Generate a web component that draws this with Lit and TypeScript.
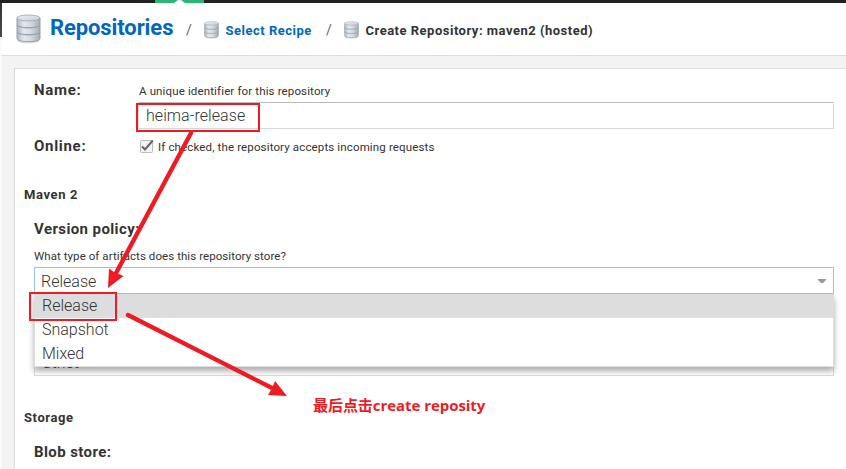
import { LitElement, html, css, svg } from "lit";
import { customElement, property } from "lit/decorators.js";

@customElement("db-icon")
class DbIcon extends LitElement {
  @property({ type: Number }) size = 16;
  static styles = css`
    :host { display: block; flex: none; }
    svg { display: block; overflow: visible; }
  `;
  render() {
    const tier = (y: number) => svg`
      <path d="M1 ${y}v6c0 2.6 4.2 3.6 11.5 3.6S24 ${y + 8.6} 24 ${y + 6}v-6z" fill="url(#side)" stroke="#8e96a0" stroke-width=".9"/>
      <ellipse cx="12.5" cy="${y}" rx="11.5" ry="3" fill="url(#top)" stroke="#9ba3ac" stroke-width=".8"/>`;
    return html`<svg width=${this.size} height=${(this.size * 29) / 25} viewBox="0 0 25 29">
      <defs>
        <linearGradient id="side"><stop offset="0" stop-color="#b0b8c2"/><stop offset=".3" stop-color="#e3e8ee"/><stop offset=".6" stop-color="#d3dae1"/><stop offset="1" stop-color="#a4acb8"/></linearGradient>
        <linearGradient id="top" x2="1" y2="1"><stop offset="0" stop-color="#eef1f4"/><stop offset="1" stop-color="#c6ced7"/></linearGradient>
      </defs>
      <ellipse cx="12.5" cy="27" rx="11" ry="2.5" fill="#0002"/>
      ${tier(18)}${tier(11)}${tier(4)}
    </svg>`;
  }
}

@customElement("app-root")
class AppRoot extends LitElement {
  static styles = css`
    :host {
      display: block; position: relative; width: 846px; height: 469px; overflow: hidden;
      background: #f3f3f3; color: #333;
      font: 12px/16px Roboto, "Noto Sans CJK SC", sans-serif;
    }
    * { box-sizing: border-box; }
    .page { display: grid; grid-template: 3px 466px / 2px 844px; }
    .top { grid-column: 1 / 3; background: #222; padding-left: 155px; }
    .tab { display: block; }
    .edge { background: linear-gradient(#333, #4c4c4c) no-repeat 0 0 / 2px 34px, #fafafa; }
    .main { display: flex; flex-direction: column; }
    .header { height: 53px; flex: none; background: #fff; border-bottom: 1px solid #ddd; display: flex; padding-left: 13.5px; }
    .icon-lg { margin-top: 11px; }
    .icon-sm { margin-top: 18px; }
    .title { font-size: 22px; font-weight: 700; color: #0067bb; line-height: 28px; margin: 11px 0 0 9.5px; width: 136px; letter-spacing: -.1px; white-space: nowrap; }
    .slash { width: 18px; line-height: 16px; margin-top: 19px; color: #666; font-size: 14px; }
    .crumb { font-size: 13px; font-weight: 700; margin: 19px 0 0 6.5px; line-height: 17px; letter-spacing: .5px; white-space: nowrap; }
    .crumb.link { color: #0067bb; width: 100.5px; }
    .panel { flex: 1; margin: 12px 0 0 12px; background: #fff; border: solid #ddd; border-width: 1px 0 0 1px; padding: 11px 12px 0 9px; }
    .row { display: grid; grid-template-columns: 104px 696px; padding-left: 10px; }
    .name { height: 56px; }
    .online { height: 31px; }
    .label { font-size: 15px; font-weight: 700; line-height: 20px; letter-spacing: .4px; white-space: nowrap; }
    .row .label { letter-spacing: .7px; }
    .help { font-size: 11.5px; line-height: 16px; letter-spacing: .14px; white-space: nowrap; }
    .name .help, .check .help { padding-top: 3px; }
    .name .help { height: 22px; padding-left: 1px; }
    .input { height: 27px; border: 1px solid #d9d9d9; border-top-color: #bbb; background: #fff; font-size: 16px; font-weight: 300; line-height: 26px; letter-spacing: .07px; padding-left: 7px; }
    .check { display: flex; gap: 4px; padding-left: 2px; }
    .box { margin-top: 4px; flex: none; display: block; overflow: visible; }
    .section { font-size: 13px; font-weight: 700; line-height: 18px; letter-spacing: .6px; }
    .maven { margin-top: 19px; }
    .policy { margin: 15px 0 0 10px; width: 800px; }
    .policy .help { margin-top: 9px; letter-spacing: .07px; }
    .combo { margin-top: 3px; height: 27px; border: 1px solid #94c4e8; display: flex; justify-content: space-between; align-items: center; font-size: 16px; font-weight: 300; line-height: 25px; padding: 0 7px 0 6px; }
    .combo span { padding-top: 1px; }
    .list { position: relative; z-index: 1; height: 73px; background: #fff; border: 1px solid #ddd; border-top: 0; box-shadow: 0 4px 6px #0005; clip-path: inset(0 -12px -12px); font-size: 16px; font-weight: 300; line-height: 24px; }
    .item { padding-left: 7px; }
    .sel { background: #ddd; }
    .under { height: 28px; margin-top: -19px; border: 1px solid #ddd; padding-left: 7px; font-size: 16px; font-weight: 300; line-height: 27px; }
    .storage { margin-top: 33px; }
    .blob { margin: 15px 0 0 10px; }
    .marks { position: absolute; inset: 0; z-index: 2; }
    .note { position: absolute; z-index: 3; left: 313px; top: 395px; color: #ed1c24; font: 700 15px/20px "Open Sans", "Noto Sans CJK SC", sans-serif; white-space: nowrap; letter-spacing: -.05px; }
  `;
  render() {
    return html`
      <div class="page">
        <div class="top"><svg class="tab" width="49" height="3"><path d="M0 0H49V3H0z" fill="#2bb673"/><path d="M19 3l4-3h3l4 3z" fill="#fff"/></svg></div>
        <div class="edge"></div>
        <div class="main">
          <div class="header">
            <db-icon class="icon-lg" .size=${25}></db-icon>
            <span class="title">Repositories</span>
            <span class="slash">/</span>
            <db-icon class="icon-sm" .size=${15}></db-icon>
            <span class="crumb link">Select Recipe</span>
            <span class="slash">/</span>
            <db-icon class="icon-sm" .size=${15}></db-icon>
            <span class="crumb">Create Repository: maven2 (hosted)</span>
          </div>
          <div class="panel">
            <div class="row name">
              <div class="label">Name:</div>
              <div><div class="help">A unique identifier for this repository</div><div class="input">heima-release</div></div>
            </div>
            <div class="row online">
              <div class="label">Online:</div>
              <div class="check">
                <svg class="box" width="14" height="14"><rect x=".5" y=".5" width="12" height="12" rx="1" fill="#f3f3f3" stroke="#bbb"/><path d="M2 6.5L5 9.5 12.8 .5" fill="none" stroke="#666" stroke-width="2"/></svg>
                <div class="help">If checked, the repository accepts incoming requests</div>
              </div>
            </div>
            <div class="section maven">Maven 2</div>
            <div class="policy">
              <div class="label">Version policy:</div>
              <div class="help">What type of artifacts does this repository store?</div>
              <div class="combo"><span>Release</span><svg width="8" height="4"><path d="M0 0h8v1L5 4H3L0 1z" fill="#999"/></svg></div>
              <div class="list">
                <div class="item sel">Release</div>
                <div class="item">Snapshot</div>
                <div class="item">Mixed</div>
              </div>
              <div class="under">Strict</div>
            </div>
            <div class="section storage">Storage</div>
            <div class="label blob">Blob store:</div>
          </div>
        </div>
      </div>
      <svg class="marks" width="846" height="469" fill="none" stroke="#ed1c24">
        <rect x="137" y="104" width="122" height="27" stroke-width="2"/>
        <rect x="30" y="293" width="86" height="27" stroke-width="2"/>
        <path d="M191 133L115 275M128 315L274 389" stroke-width="4.4" stroke-linecap="round"/>
        <path d="M108 288L109 268.5 114 272 123.5 276zM287 396L275 381 272 388 268 395z" fill="#ed1c24" stroke="none"/>
      </svg>
      <div class="note">最后点击create reposity</div>
    `;
  }
}
